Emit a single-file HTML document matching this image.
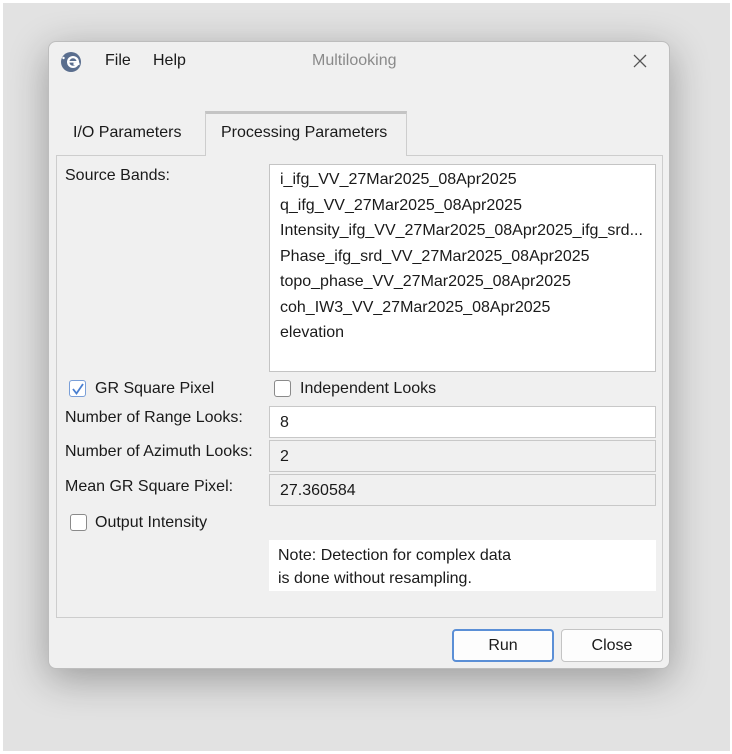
<!DOCTYPE html>
<html><head><style>
*{box-sizing:border-box;margin:0;padding:0}
body{width:732px;height:754px;background:#fff;font-family:"Liberation Sans",sans-serif;font-size:16px;color:#1a1a1a;position:relative;overflow:hidden}
.bg{position:absolute;left:3px;top:3px;width:727px;height:748px;background:#e2e2e2}
.win{position:absolute;left:48px;top:41px;width:622px;height:628px;background:#f0f0f0;border:1px solid #bdbdbd;border-radius:8px;box-shadow:0 10px 40px rgba(0,0,0,.32)}
.a{position:absolute;white-space:nowrap}
.box{position:absolute;border:1px solid #c8c8c8}
.cb{position:absolute;width:17px;height:17px;border:1px solid #8a8a8a;border-radius:3px;background:#fff}
.btn{position:absolute;height:33px;border:1px solid #c4c4c4;border-radius:4px;background:#fdfdfd;text-align:center;line-height:31px}
</style></head><body>
<div class="bg"></div>
<div class="win"></div>
<svg class="a" style="left:59px;top:50px" width="24" height="24" viewBox="0 0 24 24"><circle cx="12" cy="12" r="10" fill="#5a6e8e"/><circle cx="14" cy="12" r="6" fill="#fff"/><circle cx="14" cy="12" r="3.7" fill="#5a6e8e"/><rect x="10" y="11" width="8" height="1.6" fill="#fff"/><rect x="14.5" y="12.6" width="6" height="2.5" fill="#fff"/><circle cx="4.5" cy="8" r="1.2" fill="#fff"/></svg>
<div class="a" style="left:105px;top:52px;font-size:16px">File</div>
<div class="a" style="left:153px;top:52px;font-size:16px">Help</div>
<div class="a" style="left:312px;top:52px;font-size:16px;color:#8a8a8a">Multilooking</div>
<svg class="a" style="left:632px;top:53px" width="16" height="16"><path d="M2 2L14 14M14 2L2 14" stroke="#555" stroke-width="1.3"/></svg>
<div class="a" style="left:73px;top:124px">I/O Parameters</div>
<div class="box" style="left:56px;top:155px;width:607px;height:463px;border-color:#cdcdcd"></div>
<div class="a" style="left:205px;top:111px;width:202px;height:45px;background:#f0f0f0;border:1px solid #cdcdcd;border-top:3px solid #c4c4c4;border-bottom:none"></div>
<div class="a" style="left:221px;top:124px">Processing Parameters</div>
<div class="a" style="left:65px;top:167px">Source Bands:</div>
<div class="box" style="left:269px;top:164px;width:387px;height:208px;background:#fff;border-color:#c4c4c4"></div>
<div class="a" style="left:280px;top:167px;line-height:25.5px">i_ifg_VV_27Mar2025_08Apr2025<br>q_ifg_VV_27Mar2025_08Apr2025<br>Intensity_ifg_VV_27Mar2025_08Apr2025_ifg_srd...<br>Phase_ifg_srd_VV_27Mar2025_08Apr2025<br>topo_phase_VV_27Mar2025_08Apr2025<br>coh_IW3_VV_27Mar2025_08Apr2025<br>elevation</div>
<div class="cb" style="left:69px;top:380px;border-color:#7a9fd8"></div>
<svg class="a" style="left:71px;top:382px" width="14" height="14"><path d="M2 7L5.5 11.5L12 2" stroke="#4a7fd0" stroke-width="1.8" fill="none"/></svg>
<div class="a" style="left:95px;top:380px">GR Square Pixel</div>
<div class="cb" style="left:274px;top:380px"></div>
<div class="a" style="left:300px;top:380px">Independent Looks</div>
<div class="a" style="left:65px;top:409px">Number of Range Looks:</div>
<div class="box" style="left:269px;top:406px;width:387px;height:32px;background:#fff"></div>
<div class="a" style="left:280px;top:414px">8</div>
<div class="a" style="left:65px;top:443px">Number of Azimuth Looks:</div>
<div class="box" style="left:269px;top:440px;width:387px;height:32px"></div>
<div class="a" style="left:280px;top:448px">2</div>
<div class="a" style="left:65px;top:478px">Mean GR Square Pixel:</div>
<div class="box" style="left:269px;top:474px;width:387px;height:32px"></div>
<div class="a" style="left:280px;top:482px">27.360584</div>
<div class="cb" style="left:70px;top:514px"></div>
<div class="a" style="left:95px;top:514px">Output Intensity</div>
<div class="a" style="left:269px;top:540px;width:387px;height:51px;background:#fff"></div>
<div class="a" style="left:278px;top:544px;line-height:23px">Note: Detection for complex data<br>is done without resampling.</div>
<div class="btn" style="left:452px;top:629px;width:102px;border:2px solid #5b8fd6;line-height:29px">Run</div>
<div class="btn" style="left:561px;top:629px;width:102px">Close</div>
</body></html>
